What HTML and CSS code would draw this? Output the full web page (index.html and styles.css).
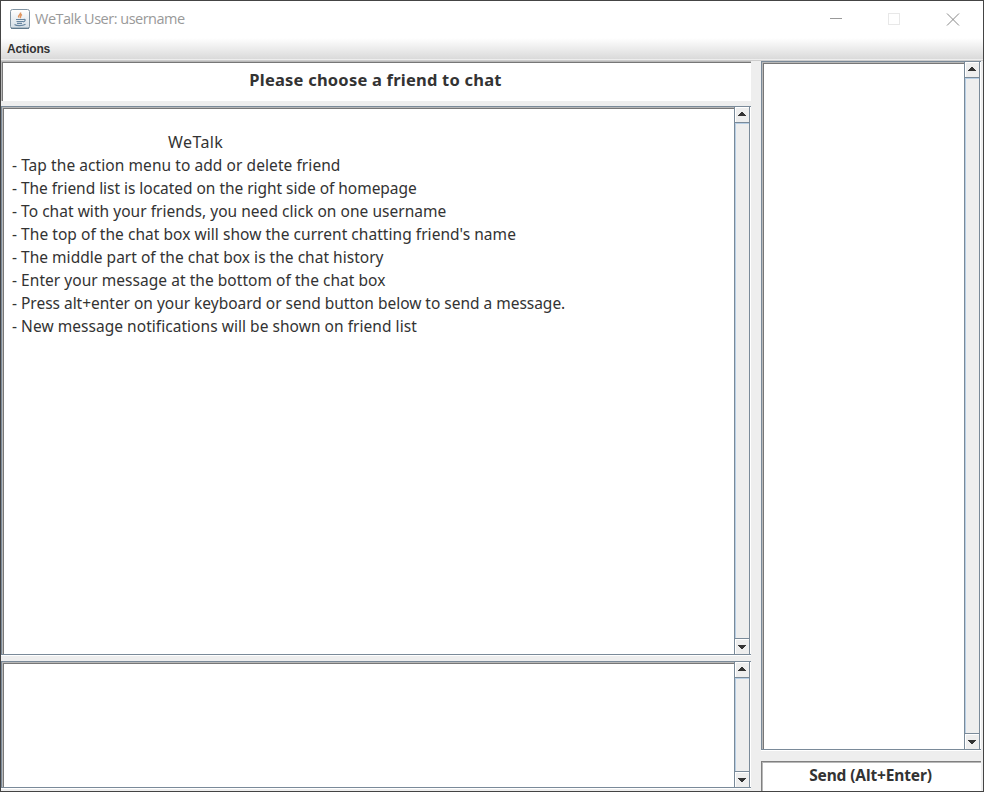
FILE: index.html
```html
<!DOCTYPE html>
<html lang="en">
<head>
<meta charset="utf-8">
<title>WeTalk User: username</title>
<link rel="stylesheet" href="styles.css">
</head>
<body>
<div class="window">
  <header class="titlebar">
    <svg class="java" width="20" height="20" viewBox="0 0 20 20">
      <defs><linearGradient id="g" x2="0" y2="1"><stop stop-color="#fff"/><stop offset="1" stop-color="#d3dde5"/></linearGradient></defs>
      <rect x=".5" y=".5" width="19" height="19" rx="2" fill="url(#g)" stroke="#8194a3"/>
      <path d="M1 19.2H19" stroke="#526d83"/>
      <path d="M10.500 3.500c1 2-3 2.500-1.800 5M12 5.500C9.500 6.500 11.500 7.500 10 9" fill="none" stroke="#e0955f" stroke-width="1.500"/>
      <path d="M6 10.500h7.500M6.500 12.500h6.500M7 14.300h5M13.500 10.500c2.500-.5 2 2-.5 2.300M4.500 15.500c2 1.500 8 1.500 11-.2" fill="none" stroke="#6685a0" stroke-width="1.200"/>
    </svg>
    <span class="caption">WeTalk User: username</span>
    <svg class="controls" width="130" height="16" viewBox="0 0 130 16" fill="none">
      <path d="M2 7.500H14" stroke="#999"/>
      <rect x="60.500" y="2.500" width="11" height="11" stroke="#e8e8e8"/>
      <path d="M119 2.500L131 14.500M131 2.500L119 14.500" stroke="#888"/>
    </svg>
  </header>
  <nav class="menubar">Actions</nav>
  <main class="content">
    <section class="left">
      <div class="field heading"><span>Please choose a friend to chat</span></div>
      <div class="pane chat">
        <div class="view">
          <p class="name">WeTalk</p>
          <p class="l1">- Tap the action menu to add or delete friend</p>
          <p class="l2">- The friend list is located on the right side of homepage</p>
          <p class="l3">- To chat with your friends, you need click on one username</p>
          <p class="l4">- The top of the chat box will show the current chatting friend's name</p>
          <p class="l5">- The middle part of the chat box is the chat history</p>
          <p class="l6">- Enter your message at the bottom of the chat box</p>
          <p class="l7">- Press alt+enter on your keyboard or send button below to send a message.</p>
          <p class="l8">- New message notifications will be shown on friend list</p>
        </div>
        <div class="scroll"><i class="btn up"></i><i class="track"></i><i class="btn down"></i></div>
      </div>
      <div class="pane input">
        <div class="view"></div>
        <div class="scroll"><i class="btn up"></i><i class="track"></i><i class="btn down"></i></div>
      </div>
    </section>
    <section class="right">
      <div class="pane friends">
        <div class="view"></div>
        <div class="scroll"><i class="btn up"></i><i class="track"></i><i class="btn down"></i></div>
      </div>
      <div class="field send"><span>Send (Alt+Enter)</span></div>
    </section>
  </main>
</div>
</body>
</html>
```
FILE: styles.css
```css
* { box-sizing: border-box; }
body { margin: 0; overflow: hidden; }
.window { width: 984px; height: 792px; border: 1px solid #444; background: #eee; display: flex; flex-direction: column; color: #333; font-family: "Noto Sans", sans-serif; }
.titlebar { height: 37px; background: #fff; display: flex; align-items: flex-start; padding: 8px 25px 0 9px; }
.java { flex: none; }
.caption { margin-left: 5px; font: 14.5px/20px "Open Sans", sans-serif; color: #999; letter-spacing: -.5px; white-space: nowrap; }
.controls { margin: 2px 0 0 auto; overflow: visible; }
.menubar { height: 23px; flex: none; padding-left: 6px; background: linear-gradient(#fff, #dadada 21px, #eee 21px, #eee 22px, #ccc 22px); font: bold 12px/22px "Liberation Sans", sans-serif; letter-spacing: -.12px; }
.content { flex: 1; display: flex; gap: 10px; min-height: 0; }
.left { width: 750px; display: flex; flex-direction: column; }
.right { width: 220px; display: flex; flex-direction: column; }
.field { background: #fff; border-top: 1px solid #b8b8b8; border-left: 1px solid #b8b8b8; box-shadow: inset 1px 1px #777; text-align: center; font-weight: bold; font-size: 16px; white-space: nowrap; }
.heading { height: 40px; line-height: 35px; margin-bottom: 5px; font-size: 16.5px; letter-spacing: .22px; padding-right: 2px; }
.pane { border: 1px solid #7a8a99; border-right: 0; display: flex; background: #fff; box-shadow: 0 1px #fff; }
.chat { height: 549px; margin-bottom: 6px; }
.input { height: 127px; }
.friends { height: 689px; margin-bottom: 11px; }
.send { height: 30px; line-height: 27px; font-size: 15.5px; letter-spacing: -.13px; padding-right: 2px; border-color: #808080; box-shadow: inset 1px 1px #b8b8b8; }
.view { flex: 1; border-top: 1px solid #b8b8b8; border-left: 1px solid #b8b8b8; box-shadow: inset 1px 1px #777; padding: 23px 0 0 9px; }
.view p { margin: 0; font-size: 15.5px; line-height: 23px; height: 23px; white-space: pre; width: max-content; }
.view .name { margin-left: 156px; font-size: 16px; letter-spacing: .4px; }
.l1 { letter-spacing: .07px; }
.l2 { letter-spacing: -.035px; }
.l3 { letter-spacing: .035px; }
.l4 { letter-spacing: .043px; }
.l5 { letter-spacing: .02px; }
.l6 { letter-spacing: .04px; }
.l7 { letter-spacing: -.02px; }
.l8 { letter-spacing: .04px; }
.scroll { width: 17px; border-left: 1px solid #7a8a99; border-right: 1px solid #fff; display: flex; flex-direction: column; box-shadow: inset -1px 0 #7a8a99; padding-right: 1px; background: #eee; }
.btn { height: 15px; flex: none; border: 1px solid #fff; border-right: 0; border-bottom: 0; padding: 4px 0 0 2px; }
.btn::before { content: ""; display: block; width: 8px; height: 4px; background: #333; }
.btn.down { padding-top: 5px; }
.up::before { clip-path: polygon(3px 0, 5px 0, 5px 1px, 6px 1px, 6px 2px, 7px 2px, 7px 3px, 8px 3px, 8px 4px, 0 4px, 0 3px, 1px 3px, 1px 2px, 2px 2px, 2px 1px, 3px 1px); }
.down::before { clip-path: polygon(0 0, 8px 0, 8px 1px, 7px 1px, 7px 2px, 6px 2px, 6px 3px, 5px 3px, 5px 4px, 3px 4px, 3px 3px, 2px 3px, 2px 2px, 1px 2px, 1px 1px, 0 1px); }
.track { flex: 1; border-top: 1px solid #7a8a99; border-bottom: 1px solid #7a8a99; box-shadow: inset 1px 1px #b8cfe5; }
```
